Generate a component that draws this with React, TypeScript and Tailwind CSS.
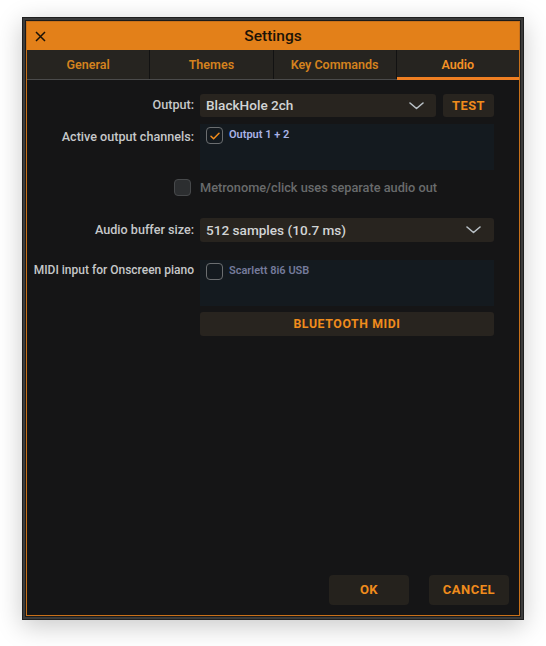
import { useState } from "react";

function Chevron() {
  return (
    <svg width="15" height="8" viewBox="0 0 15 8" fill="none">
      <path d="M1 1l6.5 5.5L14 1" stroke="#b9c1c7" strokeWidth="1.6" strokeLinecap="round" strokeLinejoin="round" />
    </svg>
  );
}

function Check({ checked }: { checked: boolean }) {
  return (
    <div className="w-[17px] h-[17px] shrink-0 rounded-[4px] border-[1.5px] border-[#6b6e70] flex items-center justify-center">
      {checked && (
        <svg width="10" height="8" viewBox="0 0 10 8" fill="none">
          <path d="M1 4.2l2.6 2.6L9 1.2" stroke="#f08c1c" strokeWidth="1.5" strokeLinecap="round" strokeLinejoin="round" />
        </svg>
      )}
    </div>
  );
}

const tabs = ["General", "Themes", "Key Commands", "Audio"];

export default function App() {
  const [tab, setTab] = useState("Audio");

  return (
    <div className="min-h-screen bg-white pt-[17px] pl-[22px]" style={{ fontFamily: "Roboto, 'Liberation Sans', sans-serif" }}>
      <div className="w-[502px] h-[603px] border border-[#1f1f1f] bg-[#3b3b3b] p-[2px] shadow-[0_6px_24px_rgba(0,0,0,0.22)]">
        <div className="h-full border border-[#1b1b1b]">
          <div className="h-full flex flex-col border border-[#c9711a] bg-[#151516]">
            {/* title */}
            <div className="h-[28px] shrink-0 bg-[#e38019] flex items-center relative">
              <svg className="absolute left-[8px] top-[9px]" width="11" height="11" viewBox="0 0 11 11">
                <path d="M1 1l9 9M10 1l-9 9" stroke="#1a1208" strokeWidth="1.5" />
              </svg>
              <div className="w-full text-center text-[15.5px] font-medium text-[#1b1307] pt-[1px]">Settings</div>
            </div>

            {/* tabs */}
            <div className="flex h-[30px] shrink-0 bg-[#262420] border-b border-[#4b4b4b]">
              {tabs.map((t, i) => (
                <button
                  key={t}
                  onClick={() => setTab(t)}
                  className={`flex-1 relative flex items-center justify-center pt-[2px] text-[12.5px] font-semibold ${
                    i > 0 ? "border-l border-[#121212]" : ""
                  } ${t === tab ? "text-[#f59326]" : "text-[#d4821e]"}`}
                >
                  {t}
                  {t === tab && <div className="absolute left-0 right-0 bottom-[-1px] h-[3px] bg-[#ef7f22]" />}
                </button>
              ))}
            </div>

            {/* body */}
            <div className="flex-1 flex flex-col pt-[14px] pr-[24px]">
              <div className="flex items-center">
                <div className="w-[167px] text-right text-[12.6px] font-medium text-[#c6c8c9]">Output:</div>
                <div className="ml-[6px] w-[236px] h-[23px] rounded-[3px] bg-[#28241f] flex items-center justify-between pl-[6px] pr-[12px]">
                  <span className="text-[13.6px] font-medium text-[#d2d4d5]">BlackHole 2ch</span>
                  <Chevron />
                </div>
                <button className="ml-[7px] w-[51px] h-[23px] rounded-[3px] bg-[#28241f] text-[12.8px] font-bold tracking-[0.5px] text-[#f08c1c]">
                  TEST
                </button>
              </div>

              <div className="flex mt-[7px]">
                <div className="w-[167px] pt-[4px] text-right text-[12.6px] font-medium text-[#c6c8c9]">Active output channels:</div>
                <div className="ml-[6px] w-[294px] h-[46px] bg-[#141a1f] flex items-start gap-[6px] pl-[6px] pt-[3px]">
                  <Check checked />
                  <span className="text-[11px] font-semibold text-[#a9b3e6] leading-[15px]">Output 1 + 2</span>
                </div>
              </div>

              <div className="flex items-center mt-[8px] pl-[147px]">
                <div className="w-[17px] h-[17px] rounded-[4px] bg-[#2c2e30] border border-[#47494b]" />
                <span className="ml-[9px] text-[12.75px] font-medium text-[#696b6c]">Metronome/click uses separate audio out</span>
              </div>

              <div className="flex items-center mt-[21px]">
                <div className="w-[167px] text-right text-[12.6px] font-medium text-[#c6c8c9]">Audio buffer size:</div>
                <div className="ml-[6px] w-[294px] h-[24px] rounded-[3px] bg-[#28241f] flex items-center justify-between pl-[6px] pr-[13px]">
                  <span className="text-[13.6px] font-medium text-[#d2d4d5]">512 samples (10.7 ms)</span>
                  <Chevron />
                </div>
              </div>

              <div className="flex mt-[18px]">
                <div className="w-[167px] pt-[1px] text-right text-[12px] font-medium text-[#c6c8c9] whitespace-nowrap">MIDI input for Onscreen piano</div>
                <div className="ml-[6px] flex flex-col">
                  <div className="w-[294px] h-[46px] bg-[#141a1f] flex items-start gap-[6px] pl-[6px] pt-[3px]">
                    <Check checked={false} />
                    <span className="text-[11px] font-semibold text-[#757b9b] leading-[15px]">Scarlett 8i6 USB</span>
                  </div>
                  <button className="mt-[6px] w-[294px] h-[24px] rounded-[3px] bg-[#28241f] text-[12.3px] font-bold tracking-[0.6px] text-[#f08c1c]">
                    BLUETOOTH MIDI
                  </button>
                </div>
              </div>

              <div className="flex-1" />

              <div className="flex justify-end gap-[20px] mr-[-14px] mb-[10px]">
                <button className="w-[80px] h-[30px] rounded-[4px] bg-[#25221d] text-[13px] font-bold tracking-[0.5px] text-[#f08c1c]">OK</button>
                <button className="w-[80px] h-[30px] rounded-[4px] bg-[#25221d] text-[13px] font-bold tracking-[0.5px] text-[#f08c1c]">CANCEL</button>
              </div>
            </div>
          </div>
        </div>
      </div>
    </div>
  );
}
